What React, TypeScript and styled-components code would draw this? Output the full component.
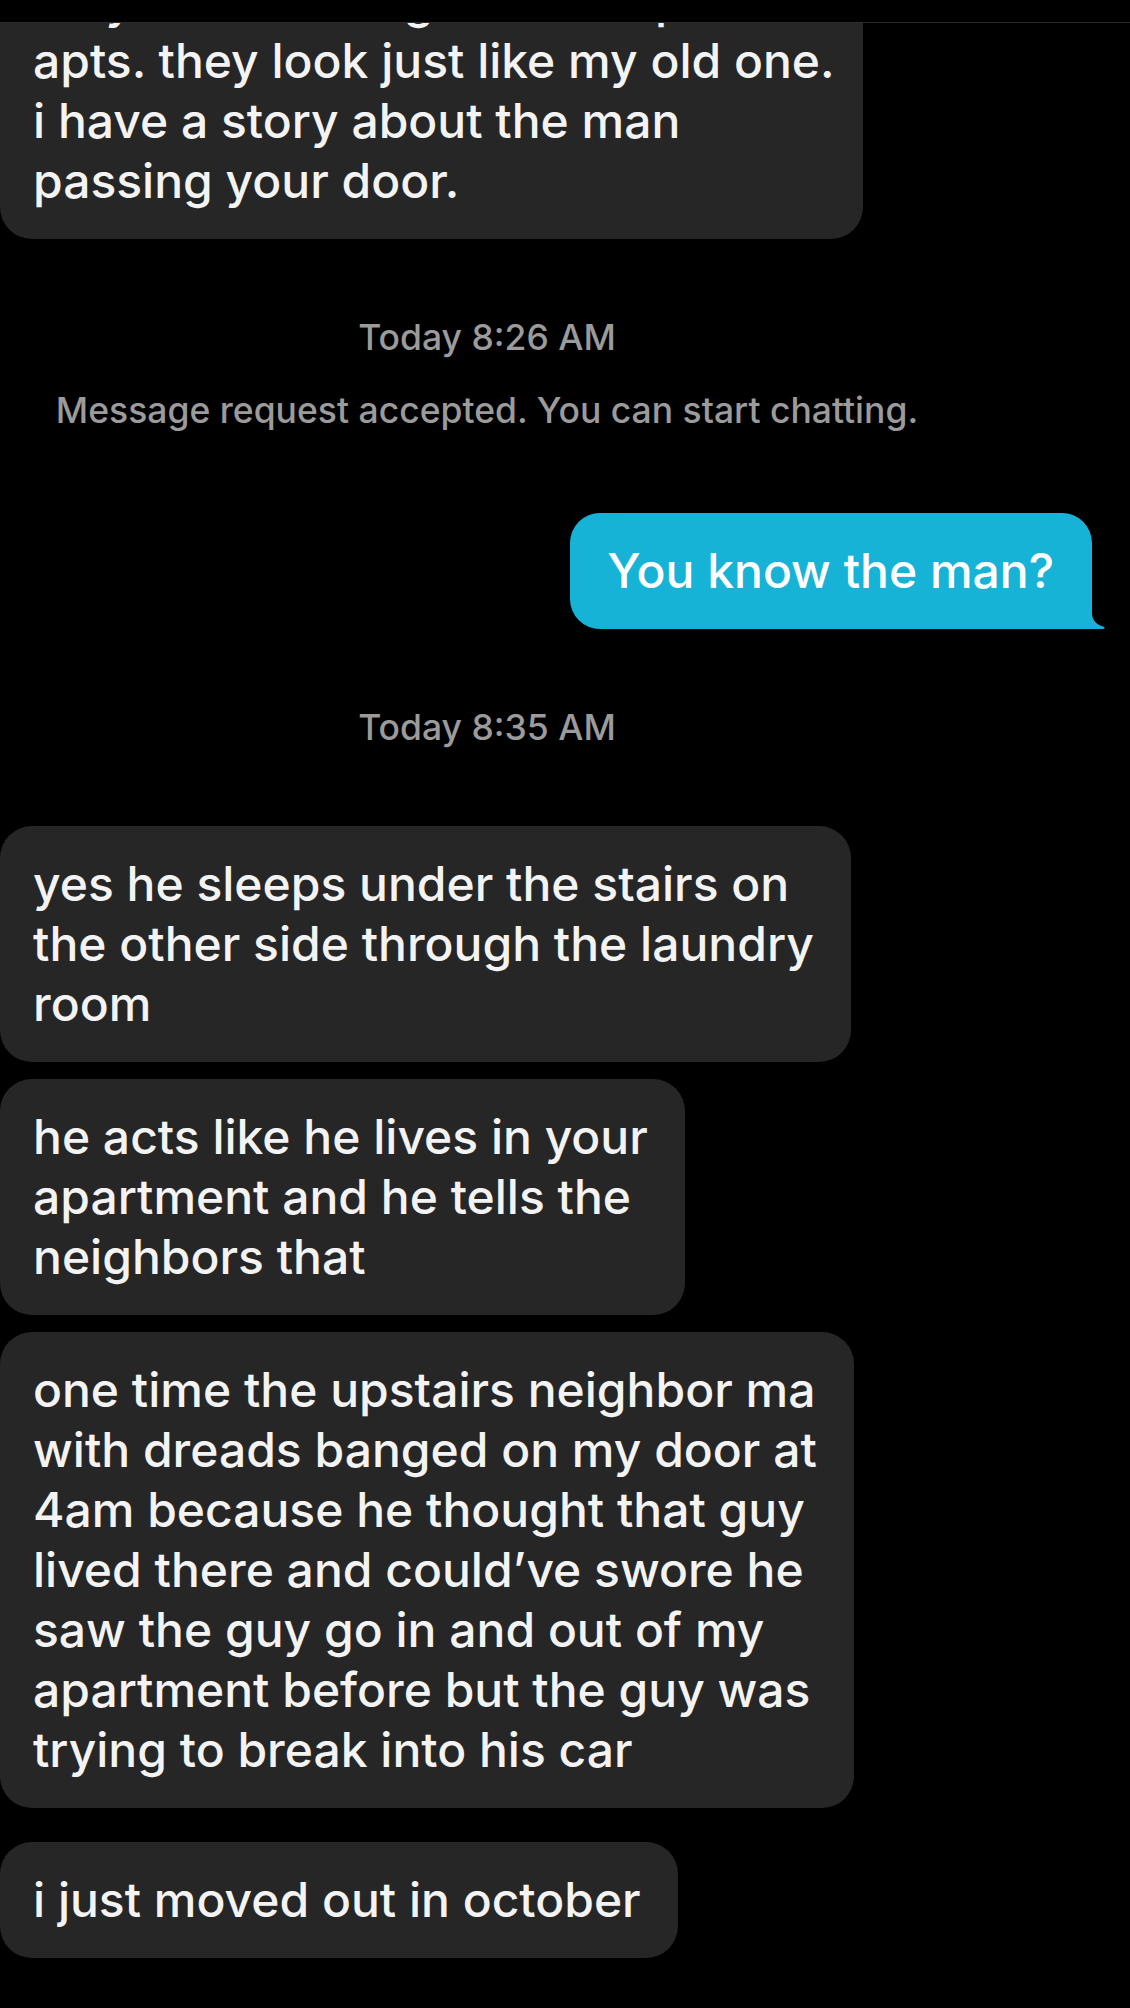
import React from "react";
import styled, { createGlobalStyle } from "styled-components";

const GlobalStyle = createGlobalStyle`
  html, body {
    margin: 0;
    padding: 0;
    background: #000;
  }
  * {
    box-sizing: border-box;
  }
`;

const Screen = styled.div`
  width: 1130px;
  height: 2008px;
  overflow: hidden;
  display: flex;
  flex-direction: column;
  background: #000;
  font-family: Inter, "Liberation Sans", sans-serif;
  -webkit-font-smoothing: antialiased;
`;

const Header = styled.div`
  flex: 0 0 23px;
  border-bottom: 1px solid #2c2c2c;
  background: #000;
`;

const Thread = styled.div`
  flex: 1;
  overflow: hidden;
`;

// the list is scrolled so the first bubble is cut by the header
const ScrollContent = styled.div`
  display: flex;
  flex-direction: column;
  margin-top: -80px;
`;

const Section = styled.section`
  display: flex;
  flex-direction: column;
  margin-top: 79px;
`;

const Stamp = styled.div`
  width: 974px;
  text-align: center;
  font-size: 35.5px;
  line-height: 40px;
  font-weight: 500;
  color: #9b9b9b;
`;

const Note = styled(Stamp)`
  margin-top: 33px;
`;

const Messages = styled.div<{ $top: number }>`
  display: flex;
  flex-direction: column;
  gap: 34px;
  margin-top: ${(p) => p.$top}px;
`;

const Cluster = styled.div`
  display: flex;
  flex-direction: column;
  align-items: flex-start;
  gap: 17px;
`;

const Row = styled.div<{ $mine?: boolean }>`
  display: flex;
  justify-content: ${(p) => (p.$mine ? "flex-end" : "flex-start")};
  padding-right: ${(p) => (p.$mine ? "38px" : "0")};
`;

const Bubble = styled.div<{ $mine?: boolean }>`
  position: relative;
  white-space: nowrap;
  font-size: 48px;
  line-height: 60px;
  font-weight: 500;
  color: ${(p) => (p.$mine ? "#ffffff" : "#f3f3f3")};
  background: ${(p) => (p.$mine ? "#17b3d7" : "#262626")};
  padding: ${(p) => (p.$mine ? "28px 38px 28px 37px" : "28px 37px 28px 33px")};
  border-radius: ${(p) => (p.$mine ? "30px 30px 0 30px" : "32px")};
`;

const TopBubble = styled(Bubble)`
  border-top-left-radius: 0;
  border-top-right-radius: 0;
  padding-right: 28px;
`;

const Tail = styled.svg`
  position: absolute;
  right: -14px;
  bottom: 0;
  width: 26px;
  height: 26px;
`;

const lines = (text: string[]) =>
  text.map((t, i) => (
    <React.Fragment key={i}>
      {i > 0 && <br />}
      {t}
    </React.Fragment>
  ));

const Incoming: React.FC<{ text: string[] }> = ({ text }) => (
  <Row>
    <Bubble>{lines(text)}</Bubble>
  </Row>
);

const Outgoing: React.FC<{ text: string }> = ({ text }) => (
  <Row $mine>
    <Bubble $mine>
      {text}
      <Tail viewBox="0 0 26 26">
        <path
          d="M0 0 H12 V10 C12 16 15 21 23 23.6 C25.4 24.4 25 26 23 26 H0 Z"
          fill="#17b3d7"
        />
      </Tail>
    </Bubble>
  </Row>
);

export default function App() {
  return (
    <>
      <GlobalStyle />
      <Screen>
        <Header />
        <Thread>
          <ScrollContent>
            <Row>
              <TopBubble>
                {lines([
                  "they were all so glad to keep the",
                  "apts. they look just like my old one.",
                  "i have a story about the man",
                  "passing your door.",
                ])}
              </TopBubble>
            </Row>

            <Section>
              <Stamp>Today 8:26 AM</Stamp>
              <Note>Message request accepted. You can start chatting.</Note>
              <Messages $top={82}>
                <Outgoing text="You know the man?" />
              </Messages>
            </Section>

            <Section>
              <Stamp>Today 8:35 AM</Stamp>
              <Messages $top={78}>
                <Cluster>
                  <Incoming
                    text={[
                      "yes he sleeps under the stairs on",
                      "the other side through the laundry",
                      "room",
                    ]}
                  />
                  <Incoming
                    text={[
                      "he acts like he lives in your",
                      "apartment and he tells the",
                      "neighbors that",
                    ]}
                  />
                  <Incoming
                    text={[
                      "one time the upstairs neighbor ma",
                      "with dreads banged on my door at",
                      "4am because he thought that guy",
                      "lived there and could\u2019ve swore he",
                      "saw the guy go in and out of my",
                      "apartment before but the guy was",
                      "trying to break into his car",
                    ]}
                  />
                </Cluster>
                <Cluster>
                  <Incoming text={["i just moved out in october"]} />
                </Cluster>
              </Messages>
            </Section>
          </ScrollContent>
        </Thread>
      </Screen>
    </>
  );
}
